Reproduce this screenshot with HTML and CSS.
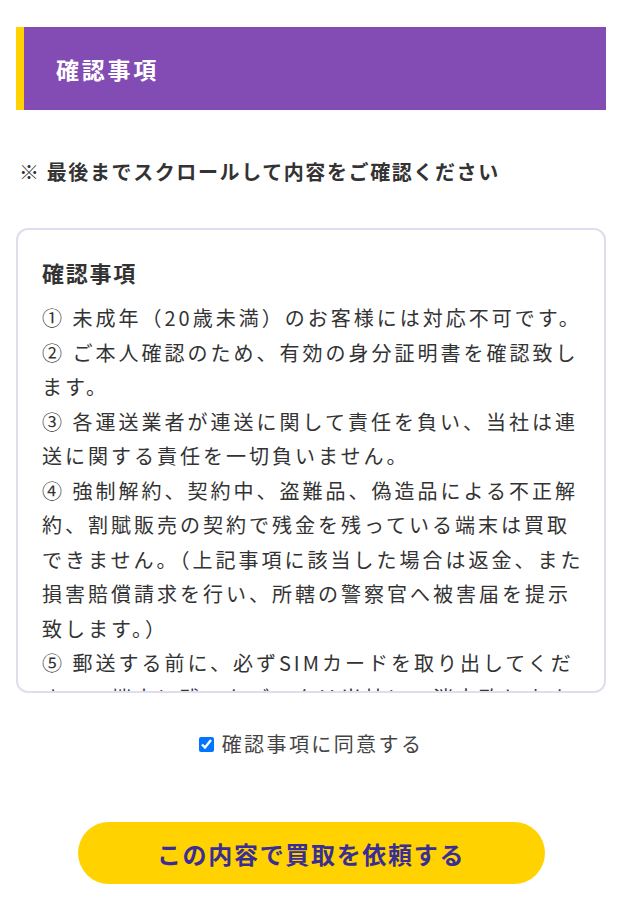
FILE: index.html
```html
<!DOCTYPE html>
<html lang="ja">
<head>
  <meta charset="UTF-8">
  <meta name="viewport" content="width=device-width, initial-scale=1.0">
  <title>確認事項</title>
  <link rel="stylesheet" href="styles.css">
</head>
<body>
  <main class="confirm">
    <h2 class="confirm-heading">確認事項</h2>

    <p class="confirm-note">※ 最後までスクロールして内容をご確認ください</p>

    <div class="terms-box">
      <h3 class="terms-title">確認事項</h3>
      <p class="terms-text">① 未成年（20歳未満）のお客様には対応不可です。<br>② ご本人確認のため、有効の身分証明書を確認致します。<br>③ 各運送業者が連送に関して責任を負い、当社は連送に関する責任を一切負いません。<br>④ 強制解約、契約中、盗難品、偽造品による不正解約、割賦販売の契約で残金を残っている端末は買取できません。（上記事項に該当した場合は返金、また損害賠償請求を行い、所轄の警察官へ被害届を提示致します。）<br>⑤ 郵送する前に、必ずSIMカードを取り出してください。端末に残ったデータは当社にて消去致しますが、万が一の情報漏洩については責任を負いかねます。<br>⑥ 買取金額にご納得いただけない場合は、返送料をご負担いただいた上で端末を返却致します。</p>
    </div>

    <label class="agree">
      <input type="checkbox" class="agree-check" checked>
      <span>確認事項に同意する</span>
    </label>

    <div class="submit-row">
      <button type="button" class="submit-btn">この内容で買取を依頼する</button>
    </div>
  </main>
</body>
</html>
```

FILE: styles.css
```css
:root {
  --purple: #834bb4;
  --yellow: #ffd200;
  --indigo: #3a2e95;
  --text: #333333;
  --border: #e0ddee;
}

html, body {
  margin: 0;
  padding: 0;
  background: #ffffff;
}

body {
  font-family: "Noto Sans CJK JP", "Noto Sans", sans-serif;
  color: var(--text);
}

.confirm {
  max-width: 590px;
  margin: 0 auto;
  padding-top: 27px;
}

.confirm-heading {
  display: flex;
  align-items: center;
  height: 83px;
  margin: 0;
  padding-left: 32px;
  border-left: 8px solid var(--yellow);
  background-color: var(--purple);
  color: #ffffff;
  font-size: 23px;
  font-weight: 700;
  letter-spacing: 0.12em;
  box-sizing: border-box;
}

.confirm-note {
  margin: 47px 0 0 3px;
  font-size: 20px;
  line-height: 30px;
  font-weight: 700;
  letter-spacing: 0.08em;
}

.terms-box {
  height: 465px;
  margin-top: 41px;
  padding: 24px 18px 0 24px;
  border: 2px solid var(--border);
  border-radius: 12px;
  box-sizing: border-box;
  overflow-y: auto;
  scrollbar-width: none;
}

.terms-box::-webkit-scrollbar {
  display: none;
}

.terms-title {
  margin: 0 0 11px;
  font-size: 22px;
  line-height: 36px;
  font-weight: 700;
  letter-spacing: 0.08em;
}

.terms-text {
  margin: 0;
  font-size: 20px;
  line-height: 34.5px;
  letter-spacing: 0.15em;
}

.agree {
  display: flex;
  justify-content: center;
  align-items: center;
  gap: 8px;
  margin-top: 36px;
  font-size: 20px;
  line-height: 30px;
  color: #444444;
  letter-spacing: 0.12em;
}

.agree-check {
  width: 15px;
  height: 15px;
  margin: 0;
}

.submit-row {
  display: flex;
  justify-content: center;
  margin-top: 63px;
  padding-bottom: 29px;
}

.submit-btn {
  width: 467px;
  height: 62px;
  border: none;
  border-radius: 31px;
  background-color: var(--yellow);
  color: var(--indigo);
  font-family: inherit;
  font-size: 24px;
  font-weight: 700;
  letter-spacing: 0.07em;
  cursor: pointer;
}
```
